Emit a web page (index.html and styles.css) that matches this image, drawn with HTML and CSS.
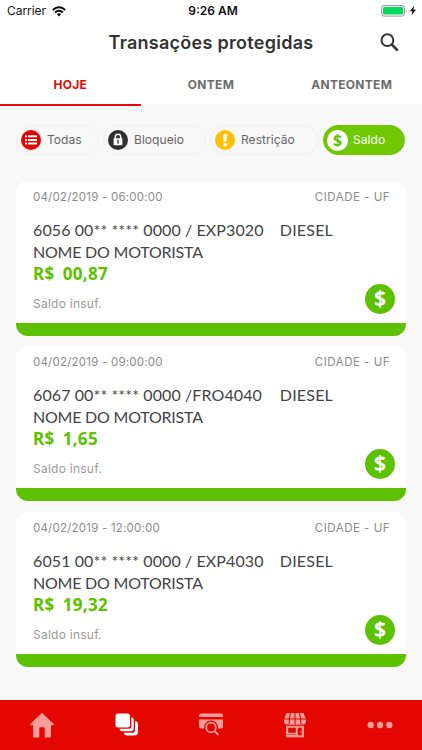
FILE: index.html
```html
<!DOCTYPE html>
<html lang="pt-BR">
<head>
<meta charset="utf-8">
<title>Transações protegidas</title>
<link rel="stylesheet" href="styles.css">
</head>
<body>
<div class="app">
  <div class="status">
    <div class="carrier"><span>Carrier</span>
      <svg width="14" height="11" viewBox="0 0 14 11" fill="none" stroke="#000" stroke-width="2"><path d="M.8 4Q7-1.6 13.2 4M3.1 6.4Q7 3 10.9 6.4"/><path d="M4.8 8.1Q7 6.3 9.2 8.1L7 10.4Z" fill="#000" stroke="none"/></svg>
    </div>
    <div class="time">9:26 AM</div>
    <div class="power">
      <svg width="36" height="12" viewBox="0 0 36 12"><rect x=".5" y=".5" width="23" height="10.6" rx="2.5" fill="#fff" stroke="#999"/><rect x="2" y="2" width="20" height="7.6" rx="1.2" fill="#04d95b"/><path d="M25 4q1.4 1.8 0 3.6z" fill="#999"/><path d="M33 .8 29 6.3h2.5L30.6 10.3 35 4.7h-2.7z" fill="#000"/></svg>
    </div>
  </div>
  <header class="header">
    <h1>Transações protegidas</h1>
    <svg class="search" width="20" height="20" viewBox="0 0 20 20" fill="none" stroke="#333"><circle cx="7.4" cy="7.2" r="5.9" stroke-width="2"/><path d="m11.6 11.4 6.2 6.2" stroke-width="2.6"/></svg>
  </header>
  <nav class="tabs">
    <div class="tab active">HOJE</div>
    <div class="tab">ONTEM</div>
    <div class="tab">ANTEONTEM</div>
  </nav>
  <main>
    <div class="chips">
      <div class="chip all">
        <svg width="20" height="20" viewBox="0 0 20 20"><circle cx="10" cy="10" r="10" fill="#e30500"/><path d="M4 5.3h2v2H4zm3 0h9v2H7zM4 8.9h2v2H4zm3 0h9v2H7zm-3 3.6h2v2H4zm3 0h9v2H7z" fill="#fff"/></svg>
        <span>Todas</span>
      </div>
      <div class="chip block">
        <svg width="20" height="20" viewBox="0 0 20 20"><circle cx="10" cy="10" r="10" fill="#302f31"/><path d="M7.3 9V7a2.7 2.7 0 0 1 5.4 0v2" fill="none" stroke="#fff" stroke-width="1.4"/><rect x="5.6" y="8.3" width="8.8" height="7" rx=".7" fill="#fff"/><path d="M10 10.2v3" stroke="#302f31" stroke-width="1.3" stroke-linecap="round"/></svg>
        <span>Bloqueio</span>
      </div>
      <div class="chip limit">
        <svg width="20" height="20" viewBox="0 0 20 20"><circle cx="10" cy="10" r="10" fill="#ffc107"/><path d="M7.900 5.500a2.100 1.700 0 0 1 4.200 0l-.8 6.200H8.700z" fill="#fff"/><circle cx="10" cy="14.700" r="1.900" fill="#fff"/></svg>
        <span>Restrição</span>
      </div>
      <div class="chip funds">
        <i class="coin">$</i>
        <span>Saldo</span>
      </div>
    </div>
    <section class="list">
      <article class="card">
        <div class="meta"><span class="date">04/02/2019 - 06:00:00</span><span class="city">CIDADE - UF</span></div>
        <div class="line"><span class="plate">6056 00** **** 0000 / EXP3020</span><span class="fuel">DIESEL</span></div>
        <div class="name">NOME DO MOTORISTA</div>
        <div class="amount">R$ 00,87</div>
        <div class="note">Saldo insuf.</div>
        <i class="badge">$</i>
      </article>
      <article class="card">
        <div class="meta"><span class="date">04/02/2019 - 09:00:00</span><span class="city">CIDADE - UF</span></div>
        <div class="line"><span class="plate">6067 00** **** 0000 /FRO4040</span><span class="fuel">DIESEL</span></div>
        <div class="name">NOME DO MOTORISTA</div>
        <div class="amount">R$ 1,65</div>
        <div class="note">Saldo insuf.</div>
        <i class="badge">$</i>
      </article>
      <article class="card">
        <div class="meta"><span class="date">04/02/2019 - 12:00:00</span><span class="city">CIDADE - UF</span></div>
        <div class="line"><span class="plate">6051 00** **** 0000 / EXP4030</span><span class="fuel">DIESEL</span></div>
        <div class="name">NOME DO MOTORISTA</div>
        <div class="amount">R$ 19,32</div>
        <div class="note">Saldo insuf.</div>
        <i class="badge">$</i>
      </article>
    </section>
  </main>
  <footer class="bar">
    <div><svg width="26" height="26" viewBox="0 0 26 26" fill="#ff9c97"><path d="M13 .8 24.7 12c.5.7 0 1.3-.8 1.3H22v11.2q0 1-1 1h-5.3v-9.2q0-1-1-1h-3.4q-1 0-1 1v9.2H5q-1 0-1-1V13.300H2.100c-.8 0-1.300-.6-.8-1.300z"/></svg></div>
    <div><svg width="26" height="26" viewBox="0 0 26 26" fill="#fff"><rect x="1.500" y="1.500" width="14.500" height="14" rx="2.500"/><path d="M17.400 5.200q2.300.2 2.300 2.700v8.300q0 3-3 3H8.400q-2.700 0-3-2.500h9.500q2.500 0 2.500-2.500zM21 9q3 .3 3 3v8q0 3.400-3.400 3.400h-7.500q-2.800 0-3.300-2.700h8.400q2.800 0 2.800-2.800z"/></svg></div>
    <div><svg width="28" height="26" viewBox="0 0 28 26"><path d="M4 1.500h20q2 0 2 2v1.600H2V3.500q0-2 2-2zM2 7.500h24v7q0 2-2 2H4q-2 0-2-2z" fill="#ff9c97"/><circle cx="14" cy="15.500" r="7" fill="#e40600"/><path d="m17 18 6 6" stroke="#e40600" stroke-width="4"/><circle cx="14" cy="15.500" r="4.800" fill="none" stroke="#ff9c97" stroke-width="1.800"/><path d="m17.500 19 4 4" stroke="#ff9c97" stroke-width="2"/></svg></div>
    <div><svg width="26" height="26" viewBox="0 0 26 26"><path d="M4.500 1h17L24 7.500v3q-1 3-4 1.700-2 1.800-3.800 0-3.200 1.800-6.400 0-1.800 1.800-3.800 0-3 1.300-4-1.700v-3z" fill="#ff9c97"/><path d="M8.500 1 7.300 7v5.500M13 1v12M17.500 1l1.200 6v5.500M2 7h22" fill="none" stroke="#e40600" stroke-width="1.100"/><path d="M4 13.800h18v11.500H4z" fill="#ff9c97"/><path d="M6.500 16h7v4.500h-7zM16 16h3.500v7H16z" fill="#e40600" stroke="#c91512" stroke-width=".6"/><path d="M3.500 22.500h11" stroke="#ef554f"/><circle cx="18.500" cy="20" r=".6" fill="#ff9c97"/></svg></div>
    <div><svg width="26" height="26" viewBox="0 0 26 26" fill="#ff9c97"><circle cx="3.700" cy="13" r="3.200"/><circle cx="13" cy="13" r="3.200"/><circle cx="22.300" cy="13" r="3.200"/></svg></div>
  </footer>
</div>
</body>
</html>
```
FILE: styles.css
```css
* { box-sizing: border-box; }
body { margin: 0; font-family: Lato, sans-serif; background: #f8f8f8; }
svg { display: block; flex: none; }
i { font-style: normal; }
.app { width: 422px; height: 750px; display: flex; flex-direction: column; overflow: hidden; }

.status { height: 22px; background: #fff; display: grid; grid-template-columns: 1fr 1fr 1fr; align-items: center; padding: 0 5px 0 7px; font: 12px/22px Inter, sans-serif; color: #111; }
.carrier { display: flex; align-items: center; gap: 6px; letter-spacing: -.05px; }
.time { text-align: center; font-weight: 600; padding-left: 2px; }
.power { display: flex; justify-content: flex-end; }

.header { height: 44px; background: #fff; display: grid; grid-template-columns: 1fr 20px; align-items: center; padding: 0 22px 2px 42px; }
.header h1 { margin: 0; text-align: center; font: 600 18px/24px Inter, sans-serif; color: #333; letter-spacing: .28px; white-space: nowrap; }
.tabs { height: 38px; background: #fff; display: grid; grid-template-columns: repeat(3, 1fr); text-align: center; font: 700 12px/38px Inter, sans-serif; letter-spacing: .3px; color: #6c6c6c; }
.tab.active { color: #e30a08; border-bottom: 2px solid #e30a08; }

main { flex: 1; }
.chips { display: flex; margin: 21px 17px 0 16px; gap: 4px; }
.chip { height: 30px; border: 1px solid #f0f0f0; border-radius: 15px; display: flex; align-items: center; gap: 6px; padding-left: 4px; font: 12px/28px Inter, sans-serif; letter-spacing: .05px; color: #666; white-space: nowrap; }
.all { width: 83px; }
.block { width: 103px; }
.limit { width: 109px; }
.funds { width: 82px; background: #70c900; border-color: #70c900; color: #fff; gap: 5px; padding-left: 3px; }
.coin, .badge { font-family: "Noto Sans", sans-serif; font-weight: 700; border-radius: 50%; text-align: center; flex: none; }
.coin { width: 21px; height: 21px; font-size: 16px; line-height: 21px; background: #fff; color: #62c102; }

.list { display: flex; flex-direction: column; gap: 10.300px; padding: 26px 16px 0; }
.card { position: relative; height: 155px; padding: 7px 16px 0 17px; background: #fff; border-radius: 12px; overflow: hidden; border-bottom: 13px solid #5bc100; color: #444; }
.meta { display: flex; justify-content: space-between; font: 11.500px/18px Inter, sans-serif; color: #8b8b8b; }
.date { letter-spacing: .22px; }
.city { letter-spacing: .5px; }
.line { display: flex; justify-content: space-between; width: 300px; margin-top: 13px; }
.line, .name { font-size: 16px; line-height: 22px; white-space: nowrap; }
.plate { letter-spacing: .1px; }
.fuel { letter-spacing: .2px; }
.name { letter-spacing: -.22px; }
.amount { font: 700 17px/22px "Noto Sans", sans-serif; color: #5bc100; letter-spacing: .3px; word-spacing: 3.500px; }
.note { margin-top: 10px; font: 12px/18px Inter, sans-serif; letter-spacing: .25px; color: #999; }
.badge { position: absolute; right: 11px; bottom: 9px; width: 30px; height: 30px; font-size: 21px; line-height: 28px; background: #5bc100; color: #fff; }

.bar { height: 50px; background: #e40600; display: grid; grid-template-columns: repeat(5, 1fr); place-items: center; }
```
